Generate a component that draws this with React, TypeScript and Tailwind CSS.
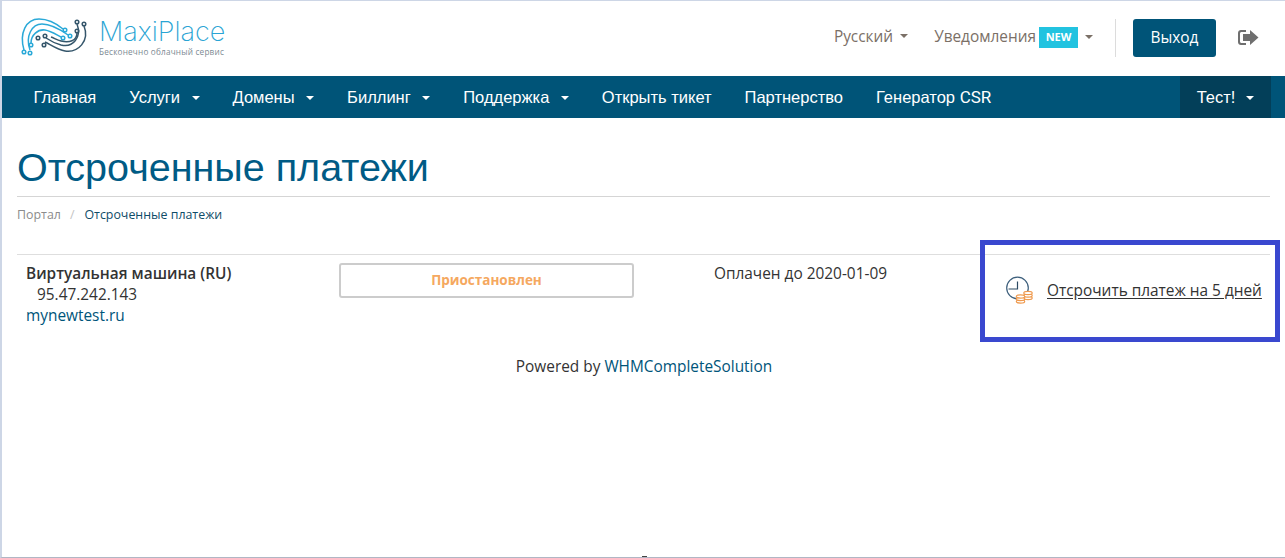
import React from 'react';

const navItems = [
  { label: 'Главная' },
  { label: 'Услуги', caret: true },
  { label: 'Домены', caret: true },
  { label: 'Биллинг', caret: true },
  { label: 'Поддержка', caret: true },
  { label: 'Открыть тикет' },
  { label: 'Партнерство' },
];

const Caret = ({ className }: { className: string }) => (
  <span className={`inline-block w-0 h-0 border-x-4 border-x-transparent border-t-4 ${className}`} />
);

const Logo = () => (
  <svg width="80" height="50" viewBox="0 0 80 50" fill="none" className="shrink-0">
    <g stroke="#2aa9d8" strokeWidth="1.5">
      <path d="M9 39C4 22 11 8 24 8C34 8 42 13 48 18" />
      <path d="M15 39C10 25 17 13 27 13C37 13 46 19 53 24" />
      <path d="M16 32C16 24 23 18 30 19C36 20 42 24 46 26" />
      <circle cx="9" cy="41" r="1.8" />
      <circle cx="15" cy="42" r="1.8" />
      <circle cx="16" cy="34" r="1.8" />
      <circle cx="50" cy="19" r="1.8" />
      <circle cx="55" cy="25" r="1.8" />
      <circle cx="48" cy="27" r="1.8" />
    </g>
    <g stroke="#35566b" strokeWidth="1.5">
      <path d="M69 15C75 30 63 42 50 40C43 39 36 34 30 31" />
      <path d="M62 13C67 26 58 37 46 34C39 32 34 29 31 27" />
      <path d="M62 22C62 30 54 32 46 30C42 29 39 27 36 26" />
      <circle cx="62" cy="11" r="1.8" />
      <circle cx="69" cy="13" r="1.8" />
      <circle cx="62" cy="20" r="1.8" />
      <circle cx="23" cy="27" r="1.8" />
      <circle cx="30" cy="25" r="1.8" />
      <circle cx="29" cy="34" r="1.8" />
    </g>
  </svg>
);

const SignOutIcon = () => (
  <svg width="21" height="17" viewBox="0 0 21 17" fill="#6f6f6f">
    <path d="M3 1H8V3H3.500C2.700 3 2 3.700 2 4.500V12.500C2 13.300 2.700 14 3.500 14H8V16H3C1.300 16 0 14.700 0 13V4C0 2.300 1.300 1 3 1Z" />
    <path d="M12 1L20.500 8.500L12 16V12H5V5H12V1Z" />
  </svg>
);

const PostponeIcon = () => (
  <svg width="28" height="28" viewBox="0 0 28 28" fill="none" className="shrink-0">
    <circle cx="11.500" cy="12" r="10.800" stroke="#3d5f7c" strokeWidth="1.200" />
    <path d="M11.500 5.500V13H2.500" stroke="#2c4a63" strokeWidth="1.200" />
    <g stroke="#ef9a4f" strokeWidth="1.200" fill="#fff">
      <ellipse cx="22" cy="22" rx="4.200" ry="1.600" />
      <ellipse cx="22" cy="19.500" rx="4.200" ry="1.600" />
      <ellipse cx="22" cy="17" rx="4.200" ry="1.600" />
      <ellipse cx="14.500" cy="25.500" rx="4.200" ry="1.600" />
      <ellipse cx="14.500" cy="23" rx="4.200" ry="1.600" />
      <ellipse cx="14.500" cy="20.500" rx="4.200" ry="1.600" />
    </g>
  </svg>
);

const App = () => {
  return (
    <div className="relative h-[558px] overflow-hidden bg-white border-l-2 border-t border-b border-l-[#cdd6e6] border-t-[#cdd6e6] border-b-[#b0b6c4] font-['Open_Sans',sans-serif] text-[#333]">
      {/* top header */}
      <header className="flex h-[75px] items-center justify-between pl-[13px] pr-[26px]">
        <div className="flex items-center">
          <div className="-mt-[5px]">
            <Logo />
          </div>
          <div className="ml-[4px] -mt-[4px] flex flex-col">
            <span className="font-['Inter',sans-serif] font-extralight text-[27px] leading-[30px] text-[#2aa4d4]">MaxiPlace</span>
            <span className="font-['Open_Sans',sans-serif] text-[8.200px] leading-[9px] text-[#7d8a93] tracking-[0.2px]">Бесконечно облачный сервис</span>
          </div>
        </div>
        <div className="-mt-[2px] flex items-center">
          <span className="-mt-[2px] flex items-center text-[#7b7067] text-[15.400px]">
            Русский
            <Caret className="ml-[7px] border-t-[#7b7067]" />
          </span>
          <span className="ml-[26px] flex items-center text-[#7b7067] text-[15.400px]">
            <span className="-mt-[2px]">Уведомления</span>
            <span className="ml-[3px] flex h-[21px] w-[39px] items-center justify-center bg-[#22c3e0] text-[11px] font-bold text-white">NEW</span>
            <Caret className="ml-[7px] border-t-[#7b7067]" />
          </span>
          <div className="ml-[22px] h-[38px] w-px bg-[#dcdcdc]" />
          <button className="ml-[17px] h-[38px] w-[83px] rounded-[3px] bg-[#005478] text-[15.400px] text-white">Выход</button>
          <span className="ml-[22px] flex">
            <SignOutIcon />
          </span>
        </div>
      </header>

      {/* main nav */}
      <nav className="flex h-[42px] items-stretch justify-between bg-[#005478] pl-[15px] pr-[14px] font-['Liberation_Sans',sans-serif] text-[16.500px] text-white">
        <ul className="flex items-stretch">
          {navItems.map((item) => (
            <li key={item.label} className="flex items-center px-[16.500px] pt-[1px]">
              {item.label}
              {item.caret && <Caret className="ml-[11.500px] border-t-white" />}
            </li>
          ))}
          <li className="flex items-center px-[16.500px] pt-[1px]">
            Генератор&nbsp;<span className="font-['Roboto',sans-serif] text-[17px]">CSR</span>
          </li>
        </ul>
        <div className="flex w-[91px] items-center justify-center bg-[#033f59] pt-[1px]">
          Тест!
          <Caret className="ml-[11px] border-t-white" />
        </div>
      </nav>

      {/* page */}
      <main className="px-[15px]">
        <h1 className="border-b border-[#d5d5d5] pt-[26px] pb-[6px] font-['Liberation_Sans',sans-serif] text-[39.500px] leading-[46px] text-[#005b85]">
          Отсроченные платежи
        </h1>
        <div className="flex h-[36px] items-center text-[12.400px]">
          <span className="text-[#8c8c8c]">Портал</span>
          <span className="ml-[9px] text-[#c4c4c4]">/</span>
          <span className="ml-[10px] text-[#0f4c68]">Отсроченные платежи</span>
        </div>

        <div className="mt-[21px] flex border-t border-[#dedede] text-[15.400px]">
          <div className="w-[322px] pt-[8px] pl-[9px] leading-[21px]">
            <div className="font-semibold">Виртуальная машина (RU)</div>
            <div className="pl-[11px]">95.47.242.143</div>
            <div className="text-[#00557a]">mynewtest.ru</div>
          </div>
          <div className="w-[295px] pt-[8px]">
            <div className="flex h-[35px] items-center justify-center rounded-[3px] border-2 border-[#cccccc] text-[13.500px] font-bold text-[#f5a860]">
              Приостановлен
            </div>
          </div>
          <div className="ml-[80px] w-[292px] pt-[8px] leading-[21px]">Оплачен до 2020-01-09</div>
          <div className="flex items-start pt-[21px]">
            <PostponeIcon />
            <a className="ml-[13px] mt-[1px] leading-[28px] underline underline-offset-2">Отсрочить платеж на 5 дней</a>
          </div>
        </div>

        <div className="mt-[31px] pl-[1px] text-center text-[15.400px] leading-[20px]">
          Powered by <span className="text-[#00557a]">WHMCompleteSolution</span>
        </div>
      </main>

      {/* annotation frame over the page */}
      <div className="absolute left-[978px] top-[239px] h-[102px] w-[300px] border-[5px] border-[#3a48cf]" />
      <div className="absolute bottom-0 left-[640px] h-px w-[5px] bg-[#444]" />
    </div>
  );
};

export default App;
